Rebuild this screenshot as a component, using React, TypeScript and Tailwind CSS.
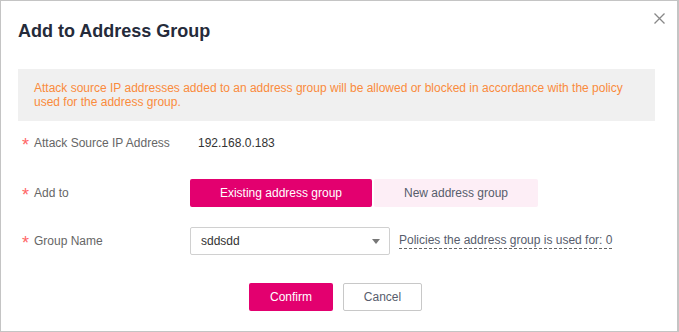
import { useState } from "react";

const font = { fontFamily: '"Liberation Sans", Arial, sans-serif' };

function Star() {
  return (
    <span className="inline-block h-[18px] w-[7px] translate-y-[2px] text-[18px] leading-none text-[#f66]">
      *
    </span>
  );
}

function Label({ text }: { text: string }) {
  return (
    <div className="flex w-[172px] shrink-0 items-center gap-[5px] pl-1 text-[12px] text-[#666]">
      <Star />
      <span>{text}</span>
    </div>
  );
}

export default function App() {
  const [mode, setMode] = useState<"existing" | "new">("existing");

  return (
    <div
      style={font}
      className="relative h-[332px] w-[679px] border border-r-2 border-[#c4c4c4] bg-white"
    >
      <button
        type="button"
        aria-label="Close"
        className="absolute right-[12px] top-[12px] text-[#888]"
      >
        <svg width="11" height="11" viewBox="0 0 11 11" fill="none">
          <path d="M0.5 0.5L10.5 10.5M10.5 0.5L0.5 10.5" stroke="currentColor" strokeWidth="1.3" />
        </svg>
      </button>

      <div className="pl-[17px] pr-[22px] pt-[18px]">
        <h1 className="text-[18px] font-bold leading-6 text-[#252b3a]">
          Add to Address Group
        </h1>

        <div className="mt-[26px] bg-[#f0f0f0] py-3 pl-4 pr-4 text-[12px] leading-[14px] text-[#fa8b3c]">
          Attack source IP addresses added to an address group will be allowed or blocked in accordance with the policy
          <br />
          used for the address group.
        </div>

        <div className="mt-2 flex h-[28px] items-center">
          <Label text="Attack Source IP Address" />
          <span className="pl-2 text-[12px] text-[#333]">192.168.0.183</span>
        </div>

        <div className="mt-[22px] flex h-[28px] items-center">
          <Label text="Add to" />
          <div className="flex gap-[2px]">
            <button
              type="button"
              onClick={() => setMode("existing")}
              className={
                mode === "existing"
                  ? "h-[28px] w-[182px] rounded-[2px] bg-[#e3006f] text-[12px] text-white"
                  : "h-[28px] w-[182px] rounded-[2px] bg-[#fdeef6] text-[12px] text-[#575d6c]"
              }
            >
              Existing address group
            </button>
            <button
              type="button"
              onClick={() => setMode("new")}
              className={
                mode === "new"
                  ? "h-[28px] w-[164px] rounded-[2px] bg-[#e3006f] text-[12px] text-white"
                  : "h-[28px] w-[164px] rounded-[2px] bg-[#fdeef6] text-[12px] text-[#575d6c]"
              }
            >
              New address group
            </button>
          </div>
        </div>

        <div className="mt-5 flex h-[28px] items-center">
          <Label text="Group Name" />
          <div className="flex h-[28px] w-[200px] items-center justify-between rounded-[2px] border border-[#d0d0d0] pl-[10px] pr-[9px] text-[12px] text-[#333]">
            <span>sddsdd</span>
            <svg width="8" height="5" viewBox="0 0 8 5">
              <path d="M0 0H8L4 5Z" fill="#777" />
            </svg>
          </div>
          <span className="ml-[9px] border-b border-dashed border-[#666] pb-[1px] text-[12px] leading-[14px] text-[#575d6c]">
            Policies the address group is used for: 0
          </span>
        </div>

        <div className="mt-7 flex justify-center gap-[10px] pr-[2px]">
          <button
            type="button"
            className="h-[28px] w-[84px] rounded-[2px] bg-[#e3006f] text-[12px] text-white"
          >
            Confirm
          </button>
          <button
            type="button"
            className="h-[28px] w-[79px] rounded-[2px] border border-[#c8c8c8] bg-white text-[12px] text-[#575d6c]"
          >
            Cancel
          </button>
        </div>
      </div>
    </div>
  );
}
